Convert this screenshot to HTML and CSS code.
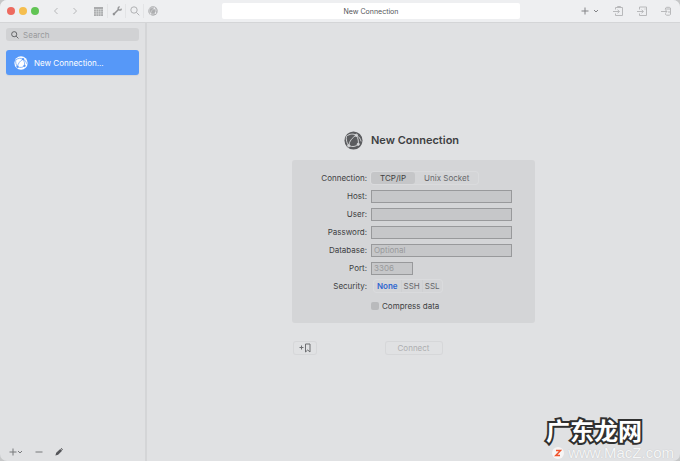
FILE: index.html
```html
<!DOCTYPE html>
<html lang="en">
<head>
    <meta charset="UTF-8">
    <title>New Connection</title>
    <link rel="stylesheet" href="styles.css">
</head>
<body>
    <svg class="symbols" aria-hidden="true">
        <symbol id="globe" viewBox="0 0 20 20">
            <circle class="globe-disc" cx="10" cy="10" r="9.5"/>
            <g class="globe-lines">
                <path d="M2.5 5.5C6 3 10 2.5 13 4.5M13 4.5C8.5 7 5.5 11 5 15.5M13 4.5C15 8 15.5 11 15 14M5 15.5C9 17 12.5 16.5 15 14M13 4.5C16 6 17.5 8.5 18 11M2.5 5.5C2 9 3 13 5 15.5"/>
                <circle cx="13" cy="4.5" r="1.2"/>
                <circle cx="5" cy="15.5" r="1.2"/>
                <circle cx="15" cy="14" r="1.2"/>
            </g>
        </symbol>
        <symbol id="plus" viewBox="0 0 8 8">
            <path d="M4 .5v7M.5 4h7"/>
        </symbol>
        <symbol id="chevron" viewBox="0 0 6 8">
            <path d="M1 3l2 2 2-2"/>
        </symbol>
        <symbol id="search" viewBox="0 0 10 10">
            <circle cx="4" cy="4" r="3.2"/>
            <path d="M6.4 6.4L9.3 9.3"/>
        </symbol>
    </svg>

    <header class="toolbar">
        <div class="lights">
            <span class="light red"></span>
            <span class="light yellow"></span>
            <span class="light green"></span>
        </div>
        <div class="arrows">
            <button type="button" aria-label="Back"><svg class="line" width="6" height="8" viewBox="0 0 6 8"><path d="M4.5 1L1.5 4l3 3"/></svg></button>
            <button type="button" aria-label="Forward"><svg class="line" width="6" height="8" viewBox="0 0 6 8"><path d="M1.5 1l3 3-3 3"/></svg></button>
        </div>
        <div class="tools">
            <button type="button" aria-label="Tables">
                <svg width="9" height="9" viewBox="0 0 9 9"><path fill="#aaabad" d="M0 0h9v9H0z"/><path stroke="#eeeff1" stroke-width=".4" d="M0 2.5h9M0 4.7h9M0 6.9h9M2.3 2v7M4.5 2v7M6.7 2v7"/></svg>
            </button>
            <button type="button" aria-label="Structure">
                <svg width="10" height="10" viewBox="0 0 10 10"><path d="M2.2 7.8l5-5" stroke="#929395" stroke-width="1.5"/><path d="M7.8.8A1.7 1.7 0 1 0 9.4 2.6" fill="none" stroke="#929395" stroke-width="1.2"/><circle cx="1.9" cy="8.1" r="1.3" fill="#929395"/></svg>
            </button>
            <button type="button" aria-label="Find"><svg class="line" width="10" height="10"><use href="#search"/></svg></button>
            <button type="button" aria-label="Connections"><svg class="globe-gray" width="10" height="10"><use href="#globe"/></svg></button>
        </div>
        <div class="title">New Connection</div>
        <div class="actions">
            <button type="button" class="add" aria-label="Add"><svg class="line" width="8" height="8"><use href="#plus"/></svg><svg class="line" width="6" height="8"><use href="#chevron"/></svg></button>
            <button type="button" aria-label="Paste"><svg class="line" width="10" height="10" viewBox="0 0 10 10"><path d="M2.5 3.5V1.5h7v8h-7v-2M4.5 1.5v-1h3v1M0 5.5h6M4.5 3.8l2 1.7-2 1.7"/></svg></button>
            <button type="button" aria-label="Import file"><svg class="line" width="10" height="10" viewBox="0 0 10 10"><path d="M2.5 3.5V1h7v8.5h-7v-2M0 5.5h6M4.5 3.8l2 1.7-2 1.7M7.5 3h1"/></svg></button>
            <button type="button" aria-label="Import database"><svg class="line" width="10" height="10" viewBox="0 0 10 10"><path d="M4.5 3.5V2c0-1 5-1 5 0v6.5c0 1-5 1-5 0V7.5M4.5 3h5M7 6h2.5M0 5.5h6M4.3 3.8L6 5.5 4.3 7.2"/></svg></button>
        </div>
    </header>

    <main class="window">
        <aside class="sidebar">
            <label class="search">
                <svg class="line" width="8" height="8" viewBox="0 0 10 10"><use href="#search"/></svg>
                <input type="search" placeholder="Search" aria-label="Search">
            </label>
            <button type="button" class="item">
                <svg class="globe-white" width="14" height="14"><use href="#globe"/></svg>
                New Connection...
            </button>
            <div class="sidebar-footer">
                <button type="button" aria-label="Add connection"><svg class="line" width="8" height="8"><use href="#plus"/></svg><svg class="line" width="6" height="8"><use href="#chevron"/></svg></button>
                <button type="button" aria-label="Remove"><svg class="line" width="8" height="8" viewBox="0 0 8 8"><path d="M.5 4h7"/></svg></button>
                <button type="button" aria-label="Edit"><svg width="8" height="8" viewBox="0 0 8 8"><path fill="#55565a" d="M.4 7.6l.8-2.8L5.2.9l1.9 1.9-4 4zM5.7.5l.7-.4 1.5 1.4-.5.8z"/></svg></button>
            </div>
        </aside>

        <section class="content">
            <form class="connection">
                <h1><svg class="globe-dark" width="19" height="19"><use href="#globe"/></svg>New Connection</h1>
                <div class="panel">
                    <span class="name" id="type-label">Connection:</span>
                    <div class="segments type" role="radiogroup" aria-labelledby="type-label">
                        <label><input type="radio" name="type" checked><span>TCP/IP</span></label>
                        <label><input type="radio" name="type"><span>Unix Socket</span></label>
                    </div>

                    <label class="name" for="host">Host:</label>
                    <input class="field" type="text" id="host">

                    <label class="name" for="user">User:</label>
                    <input class="field" type="text" id="user">

                    <label class="name" for="password">Password:</label>
                    <input class="field" type="password" id="password">

                    <label class="name" for="database">Database:</label>
                    <input class="field" type="text" id="database" placeholder="Optional">

                    <label class="name" for="port">Port:</label>
                    <input class="field port" type="text" id="port" placeholder="3306">

                    <span class="name" id="security-label">Security:</span>
                    <div class="segments security" role="radiogroup" aria-labelledby="security-label">
                        <label><input type="radio" name="security" checked><span>None</span></label>
                        <label><input type="radio" name="security"><span>SSH</span></label>
                        <label><input type="radio" name="security"><span>SSL</span></label>
                    </div>

                    <label class="compress"><input type="checkbox">Compress data</label>
                </div>
                <div class="buttons">
                    <button type="button" class="bookmark" aria-label="Add bookmark">
                        <svg class="line" width="12" height="10" viewBox="0 0 12 10"><path d="M.5 4.5h4M2.5 2.5v4M6.5 1h4.5v8L8.7 7 6.5 9z"/></svg>
                    </button>
                    <button type="submit" class="connect" disabled>Connect</button>
                </div>
            </form>
        </section>
    </main>

    <div class="watermark">
        <div class="brand" lang="zh">广东龙网</div>
        <div class="site">
            <svg width="12" height="12" viewBox="0 0 12 12"><circle cx="6" cy="6" r="6" fill="#f7f5f5"/><path d="M4 3.5h4.5L3.8 8.5H8" fill="none" stroke="#f0542d" stroke-width="1.5"/></svg>
            www.MacZ.com
        </div>
    </div>
</body>
</html>
```
FILE: styles.css
```css
* {
    box-sizing: border-box;
}

html {
    background-color: #c6c7c8;
}

body {
    margin: 0;
    height: 100vh;
    display: flex;
    flex-direction: column;
    overflow: hidden;
    border-radius: 7px;
    background-color: #e0e1e3;
    color: #3e3f42;
    font-family: Inter, "Liberation Sans", sans-serif;
    font-size: 8px;
    line-height: 12px;
}

button,
input {
    font: inherit;
    color: inherit;
}

button {
    display: flex;
    align-items: center;
    padding: 0;
    border: none;
    background: none;
}

svg {
    display: block;
    flex: none;
}

.symbols {
    position: absolute;
    width: 0;
    height: 0;
}

.line {
    fill: none;
    stroke: currentColor;
    stroke-width: 1;
}

/* globe icon */
.globe-disc {
    fill: var(--disc);
}

.globe-lines {
    fill: var(--lines);
    stroke: var(--lines);
    stroke-width: 1;
}

.globe-lines path {
    fill: none;
}

.globe-gray {
    --disc: #adaeb0;
    --lines: #eeeff1;
}

.globe-white {
    --disc: #ffffff;
    --lines: #5698f8;
}

.globe-dark {
    --disc: #5b5c5f;
    --lines: #d5d6d8;
}

/* toolbar */
.toolbar {
    display: grid;
    grid-template-columns: 32px 50px 133px 1fr 151px;
    align-items: center;
    flex: none;
    height: 23px;
    padding: 0 9px 0 7px;
    background-color: #eeeff1;
    border-bottom: 1px solid #d4d5d7;
}

.lights {
    display: flex;
    gap: 4px;
}

.light {
    width: 8px;
    height: 8px;
    border-radius: 50%;
}

.red {
    background-color: #ed6a5f;
}

.yellow {
    background-color: #f5be4f;
}

.green {
    background-color: #61c454;
}

.arrows {
    display: flex;
    gap: 13px;
    padding-left: 14px;
    color: #b5b6b8;
}

.tools {
    display: flex;
    color: #b0b1b3;
}

.tools button {
    justify-content: center;
    width: 18px;
    height: 14px;
}

.tools button + button {
    border-left: 1px solid #e3e4e6;
}

.title {
    height: 16px;
    border-radius: 2px;
    background-color: #ffffff;
    color: #55565a;
    font-size: 7px;
    line-height: 17px;
    text-align: center;
}

.actions {
    display: flex;
    justify-content: flex-end;
    gap: 14px;
    color: #b8b9bb;
}

.actions .add {
    gap: 4px;
    color: #828386;
}

/* main window */
.window {
    flex: 1;
    display: grid;
    grid-template-columns: 147px 1fr;
}

.sidebar {
    display: flex;
    flex-direction: column;
    padding: 5px 6px;
    border-right: 2px solid #d4d5d7;
}

.search {
    display: flex;
    align-items: center;
    gap: 4px;
    height: 13px;
    padding: 0 5px;
    border-radius: 3px;
    background-color: #d1d2d4;
    color: #4b4c4f;
}

.search input {
    flex: 1;
    min-width: 0;
    padding: 0;
    border: none;
    outline: none;
    background: none;
}

::placeholder {
    color: #999a9c;
    opacity: 1;
}

.item {
    gap: 6px;
    height: 25px;
    margin-top: 9px;
    padding: 0 8px;
    border-radius: 3px;
    background-color: #5698f8;
    box-shadow: 0 1px 1px #d2d4d9;
    color: #ffffff;
}

.sidebar-footer {
    display: flex;
    gap: 12px;
    margin-top: auto;
    padding-left: 3px;
    color: #77787b;
}

.content {
    padding: 107px 20px 0;
}

.connection {
    width: 100%;
    max-width: 243px;
    margin: 0 auto;
}

h1 {
    display: flex;
    align-items: center;
    gap: 8px;
    margin: 0 0 9px;
    padding-left: 52px;
    font-size: 11px;
    line-height: 21px;
    font-weight: 600;
}

.panel {
    display: grid;
    grid-template-columns: 75px 1fr;
    grid-auto-rows: 18px;
    column-gap: 4px;
    align-items: center;
    padding: 9px 23px 10px 0;
    border-radius: 3px;
    background-color: #d4d5d7;
}

.name {
    text-align: right;
}

.field {
    width: 100%;
    height: 13px;
    padding: 0 2px;
    border: 1px solid #98999b;
    border-radius: 0;
    outline: none;
    background-color: #c6c7c9;
}

.port {
    width: 42px;
}

.segments {
    display: flex;
    justify-self: start;
    border-radius: 3px;
    box-shadow: 0 0 0 1px #dadbdd;
}

.segments label {
    position: relative;
}

.segments input {
    position: absolute;
    margin: 0;
    opacity: 0;
}

.segments span {
    display: block;
}

.type span {
    padding: 0 9px;
    border-radius: 3px;
    color: #66676a;
}

.type input:checked + span {
    background-color: #c5c6c8;
    color: #3e3f42;
}

.security {
    margin-left: 3px;
}

.security span {
    padding: 0 2px;
    color: #66676a;
}

.security label + label {
    border-left: 1px solid #cfd0d2;
}

.security input:checked + span {
    padding: 0 3px;
    color: #2f66d0;
    font-weight: 600;
}

.compress {
    grid-column: 2;
    display: flex;
    align-items: center;
    gap: 3px;
    padding-top: 4px;
}

.compress input {
    appearance: none;
    width: 8px;
    height: 8px;
    margin: 0;
    border-radius: 2px;
    background-color: #b9babc;
}

.buttons {
    display: grid;
    grid-template-columns: 1fr auto 1fr;
    padding: 19px 2px 0;
}

.buttons button {
    justify-content: center;
    height: 12px;
    border-radius: 2px;
    box-shadow: 0 0 0 1px #d6d7d9;
}

.bookmark {
    width: 22px;
    color: #6d6e71;
}

.connect {
    width: 56px;
    color: #adaeb0;
}

/* watermark over the corner */
.watermark {
    position: absolute;
    right: 6px;
    bottom: 0;
}

.brand {
    margin-bottom: 2px;
    padding-right: 32px;
    color: #ffffff;
    font-family: "Noto Sans CJK SC", sans-serif;
    font-size: 24px;
    line-height: 24px;
    font-weight: 700;
    text-align: right;
    -webkit-text-stroke: 4px #303030;
    paint-order: stroke fill;
}

.site {
    display: flex;
    align-items: center;
    justify-content: flex-end;
    gap: 4px;
    color: #f5f6f7;
    font-family: "Liberation Sans", Arial, sans-serif;
    font-size: 15px;
    line-height: 17px;
    text-shadow: 0 0 1px #b4b5b7;
}
```
